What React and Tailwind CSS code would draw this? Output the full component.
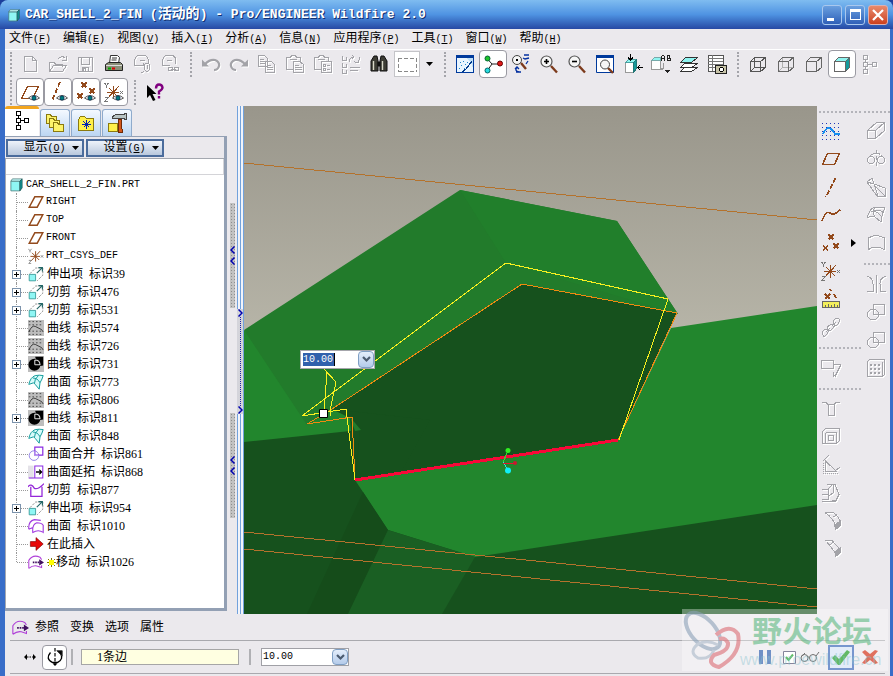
import { useState } from 'react';

const GRAY = '#a3a3a8';
const BROWN = '#934a1c';

function Svg({ children, s = 20, emboss }) {
  return (
    <svg
      width={s}
      height={s}
      viewBox="0 0 20 20"
      fill="none"
      stroke={emboss ? GRAY : '#333'}
      shapeRendering={s === 20 ? 'crispEdges' : 'auto'}
      className={emboss ? 'shrink-0 drop-shadow-[1px_1px_0_#fff]' : 'shrink-0'}
      aria-hidden="true"
    >
      {children}
    </svg>
  );
}

const Eye = () => (
  <g shapeRendering="auto">
    <path d="M8.500 16q5.500-5 11 0q-5.500 4-11 0z" fill="#fff" stroke="#555" />
    <circle cx="14" cy="16" r="2.200" fill="#007b7b" stroke="#014" strokeWidth=".6" />
  </g>
);

const Lens = ({ children }) => (
  <g shapeRendering="auto">
    <path d="M12 12l6 6.500" stroke="#7c3a1c" strokeWidth="2.400" />
    <circle cx="7.500" cy="7.500" r="5.500" fill="#f6f6f6" stroke="#555" strokeWidth="1.200" />
    {children}
  </g>
);

const xs = (pts, c = BROWN) =>
  pts.map(([x, y]) => (
    <path key={`${x}-${y}`} d={`M${x - 2.5} ${y - 2.5}l5 5m0-5l-5 5`} stroke={c} strokeWidth="1.6" />
  ));

const csys = (
  <g>
    <path d="M3 10.500h12M9.500 4v13M5 6l9 9M15 4L4 16" stroke={BROWN} strokeWidth="1.200" />
    <path d="M.5 1l2 2.500l2-2.500M2.500 3.500v2M1 15.500h3l-3 4h3M16 9l3 3m0-3l-3 3" stroke="#777" />
  </g>
);

const cube = 'M2.5 7.5h10v10h-10zM2.5 7.5l4-4h11l-5 4M17.5 3.5v10l-5 4';

const icons = {
  new: <path d="M4.500 2.500h8l4 4v11h-12zM12.500 2.500v4h4" />,
  open: <path d="M1.500 17.500v-9h5l1 2h7v2M1.500 17.500l4-6h13l-4 6zM10 5q4-4 7-1M18 2v4h-4" />,
  save: <path d="M2.500 3.500h14v14h-14zM5.500 3.500v7h8v-7M6.500 17.500v-4h6v4M7 14h2v3H7z" />,
  print: (
    <g shapeRendering="auto">
      <path d="M5.500 9.500l1-8h7l2 2-1 6" fill="#fff" />
      <path d="M8 4h5M7.500 6h5" />
      <path d="M1.500 10.500l3-2h12l2 2v6h-17z" fill="#8b8f78" stroke="#222" />
      <path d="M2 11.500h16" stroke="#ddd" />
      <path d="M4 14.500h3" stroke="#0a0" strokeWidth="2" />
      <path d="M8 14.500h3" stroke="#d00" strokeWidth="2" />
    </g>
  ),
  mail: <path d="M2.500 11.500V6q1-5 7-5t7 5v3M2.500 11.500h9v-3M8 6h5M12.500 10.500q3-3 5 0v5q-2 4-5 0zM15 11v4M12 17q-1 2-3 1" />,
  mailLink: <path d="M2.500 11.500V6q1-5 7-5t6 5v4M2.500 11.500h7M7 6h5M8.500 13.500h4v3h-4zM14.500 13.500h4v3h-4zM11 15h5" />,
  undo: (
    <g shapeRendering="auto">
      <path d="M1 5.500v7h7z" fill={GRAY} stroke="none" />
      <path d="M4 10q5-5 10-4q5 2 4 6t-5 4" strokeWidth="2.200" />
    </g>
  ),
  redo: (
    <g shapeRendering="auto">
      <path d="M19 5.500v7h-7z" fill={GRAY} stroke="none" />
      <path d="M16 10q-5-5-10-4q-5 2-4 6t5 4" strokeWidth="2.200" />
    </g>
  ),
  copy: <path d="M1.500 1.500h6l3 3v8h-9zM3 5.500h4M3 7.500h5M3 9.500h5M8.500 7.500h6l3 3v8h-9zM10 11.500h4M10 13.500h6M10 15.500h6" />,
  paste: <path d="M7.500 15.500h-6v-12h4l1-2h4l1 2h4v4M5 5.500h7M8.500 7.500h6l4 3v8h-10zM10 11.500h4M10 13.500h7M10 15.500h7" />,
  pasteSpecial: <path d="M7.500 15.500h-6v-12h4l1-2h4l1 2h4v4M5 5.500h7M8.500 7.500h10v11h-10zM10.500 10.500h2v2h-2zM10.500 14.500h2v2h-2zM14 11.500h3M14 15.500h3" />,
  regen: <path d="M1.500 2v4h4V3M1.500 9v4h4v-3M1.500 15v4h4v-3M9 16.500h8M9 13.500h10M8 8q0-5 5-5M11 1l2 2-2 2M18 3q1 5-3 6M13 7l2 2 3-1" />,
  find: (
    <g shapeRendering="auto" stroke="#111">
      <path d="M2 7l3-5h3l1 5v10H2zM18 7l-3-5h-3l-1 5v10h7z" fill="#3c3c34" />
      <path d="M9 8h2v4H9z" fill="#111" />
      <path d="M4.500 7v9M13.500 7v9" stroke="#d8d8c8" strokeWidth="1.400" />
    </g>
  ),
  select: <path d="M1 4.500h19M1 17.500h19M1.500 4v14M19.500 4v14" stroke="#888" strokeDasharray="4 2" />,
  repaint: (
    <g>
      <path d="M1.500 1.500h17v17h-17z" fill="#bfe0f7" stroke="#003a9c" />
      <path d="M1 2.500h18" stroke="#003a9c" strokeWidth="3" />
      <path d="M2 4h9q7 4 7 14H2z" fill="#e8f5ff" stroke="none" />
      <path d="M5 8.500h1M8 7.500h1M6 11.500h1M10 10.500h1M4 14.500h1M9 14.500h1M12 8.500h1" stroke="#28c" />
      <path d="M17 7l-6 8-4 3" stroke="#013a8c" strokeWidth="1.300" />
    </g>
  ),
  spin: (
    <g shapeRendering="auto">
      <path d="M4 4.500l5 5.500-5 7M9 10h9" stroke="#222" />
      <circle cx="4.500" cy="4.500" r="2.500" fill="#1fc42a" stroke="#063" />
      <circle cx="4.500" cy="16.500" r="2.500" fill="#28dce0" stroke="#066" />
      <circle cx="17" cy="9.500" r="2.500" fill="#e01818" stroke="#600" />
    </g>
  ),
  orient: (
    <g shapeRendering="auto">
      <path d="M10 9l5 6" stroke="#7c3a1c" strokeWidth="2.400" />
      <circle cx="6" cy="6" r="4.500" fill="#f6f6f6" stroke="#444" />
      <path d="M6 5v2" stroke="#000" strokeWidth="2" />
      <path d="M13 1h5M12 4l2 1 4-1M17 7l-2 3M6 13q-3 4 2 5M4 15l2-2 2 2M5 18h5" stroke="#0430a0" strokeWidth="1.300" />
    </g>
  ),
  zoomIn: <Lens><path d="M5 7.500h5M7.500 5v5" stroke="#000" strokeWidth="1.600" /></Lens>,
  zoomOut: <Lens><path d="M5 7.500h5" stroke="#000" strokeWidth="1.600" /></Lens>,
  refit: (
    <g shapeRendering="auto">
      <path d="M1.500 1.500h17v17h-17z" fill="#fff" stroke="#003a9c" />
      <path d="M1 2.500h18" stroke="#003a9c" strokeWidth="3" />
      <path d="M13 14l5 5" stroke="#7c3a1c" strokeWidth="2.400" />
      <circle cx="10" cy="10.500" r="4.500" fill="#f6f6f6" stroke="#444" />
    </g>
  ),
  reorient: (
    <g>
      <path d="M2.500 8.500h8v10h-8z" fill="#fff" stroke="#999" />
      <path d="M2.500 8.500l3-3h8l-3 3z" fill="#8ef4f0" stroke="#48a0a0" />
      <path d="M10.500 8.500l3-3v9l-3 4z" fill="#159a9a" stroke="#277" />
      <path d="M7.500 0v6M5 3.500l2.500 2.500 2.500-2.500M20 13.500h-5M17 11l-2.500 2.500L17 16" stroke="#000" strokeWidth="1.400" />
    </g>
  ),
  saved: (
    <g>
      <path d="M.5 6.500h9v9h-9z" fill="#fff" stroke="#999" />
      <path d="M.5 6.500l3-3h6v3z" fill="#8ef4f0" stroke="#7aa" />
      <path d="M12.500 9v5l-3 2" stroke="#999" strokeWidth="1.500" />
      <path d="M10.500 7V2.500l1-1h1l1 1V7M10.500 4.500h3M16.500 1v6M16 1.500h2.500v2.500H16M16 4.500h3v2h-3" stroke="#222" />
      <path d="M14 16h5l-2.500 3z" fill="#222" stroke="none" />
    </g>
  ),
  layers: (
    <g>
      <path d="M1.500 17.500l4-4h13l-6 4z" fill="#fff" />
      <path d="M1.500 13.500l4-4h13l-6 4z" fill="#fff" />
      <path d="M1.500 8.500l5-5h12l-6 5z" fill="#8ef4f0" />
    </g>
  ),
  viewMgr: (
    <g>
      <path d="M1.500 1.500h15v16h-15z" fill="#fff" stroke="#555" />
      <path d="M1 4.500h15M1 7.500h15M1 10.500h15M1 13.500h15M5.500 1v16" stroke="#777" />
      <path d="M8.500 11.500h11v8h-11z" fill="#c8c4a8" stroke="#222" />
      <circle cx="14.500" cy="15.500" r="2" fill="#fff" stroke="#000" />
    </g>
  ),
  wire: <path d={`${cube}M2.5 17.5l4-4h11M6.5 3.5v10`} stroke="#555" />,
  hidden: (
    <g>
      <path d="M2.500 17.500l4-4h11M6.500 3.500v10" stroke="#b0b0b0" />
      <path d={cube} stroke="#666" />
    </g>
  ),
  nohidden: <path d={cube} stroke="#666" />,
  shaded: (
    <g stroke="#666">
      <path d="M2.500 7.500h11v10h-11z" fill="#fff" />
      <path d="M2.500 7.500l4-4h11l-4 4z" fill="#8ef4f0" />
      <path d="M13.500 7.500l4-4v10l-4 4z" fill="#129a9c" />
    </g>
  ),
  tree: <path d="M3.500 1.500h4v4h-4zM3.500 8.500h4v4h-4zM3.500 15.500h4v4h-4zM12.500 8.500h4v4h-4zM5.500 5v4M5.500 12v4M8 10.500h5" />,
  planeEye: <g><path d="M1.500 16.500h11l6-12h-11z" stroke={BROWN} strokeWidth="1.500" /><Eye /></g>,
  axisEye: <g><path d="M12 0L4 19" stroke={BROWN} strokeWidth="1.800" strokeDasharray="5 2" /><Eye /></g>,
  pointEye: <g>{xs([[8, 3], [4, 14], [16, 9]])}<Eye /></g>,
  csysEye: <g>{csys}<Eye /></g>,
  help: (
    <g shapeRendering="auto">
      <path d="M2 3v13l3-3 3 6 2.500-1-3-6h4z" fill="#000" stroke="none" />
      <path d="M11 6.500q0-4 3-4t3.500 3q0 2-3.500 4v3" stroke="#800080" strokeWidth="2.400" />
      <path d="M14 14v2.500" stroke="#800080" strokeWidth="2.400" />
    </g>
  ),
  sketch: (
    <g>
      <path d="M1 2.500h18M1 6.500h18M1 10.500h18M1 14.500h18M1 18.500h18" stroke="#2038b8" strokeDasharray="1 3" />
      <path d="M2 13q4-9 8-5t4 5h5" stroke="#1890f0" strokeWidth="1.600" />
    </g>
  ),
  plane: <path d="M1.500 15.500h12l5-11H6.500z" stroke={BROWN} strokeWidth="1.500" />,
  axis: <path d="M14.500 1L5 20" stroke={BROWN} strokeWidth="1.800" strokeDasharray="5 2" />,
  curve: <path d="M1 16q4-11 8-8t10-3" stroke={BROWN} strokeWidth="1.500" />,
  points: <g>{xs([[10, 4], [4.5, 15], [15, 13]])}</g>,
  csys,
  analysis: (
    <g>
      {xs([[6.5, 7.5]])}
      <path d="M9 0l1 2M13 5l2 4" stroke={BROWN} strokeWidth="2" />
      <path d="M1.500 12.500h17v6h-17z" fill="#f2ee5c" stroke="#666" />
      <path d="M4.500 19v-3M7.500 19v-4M10.500 19v-3M13.500 19v-4M16.500 19v-3" stroke="#666" />
    </g>
  ),
  chain: <path d="M2 18q-2-3 1-5t4 0-2 5-3 0M7 12q-1-3 2-4t4 0-2 4-4 0M13 7q-2-3 1-5t4 0-1 5-4 0M5 15l4-4M11 9l4-4" />,
  annot: <path d="M.5 2.500h12v8H.5zM12 6.500h8l-6 12M12.500 14v4.500l4-3" />,
  hole: <path d="M1 3.500h4l2 2v11h6v-11l2-2h4M7 5.500h6" />,
  shell: <path d="M1.500 4.500l3-3h14v12l-3 3h-14zM4.500 5.500h11v11M4.500 5.500v11M7.500 8.500h5v5h-5z" />,
  rib: (
    <g>
      <path d="M2.500 8v10.500h14" strokeDasharray="1 1" />
      <path d="M4.500 6v10.500h11zM2 6l6-6M14 16l5-4" />
    </g>
  ),
  draft: <path d="M1 6.500h6v10H1M7 6.500l4-5h3l4 10-3 6-8 1M6 1.500h6M12 2v8l-4 3M1 11.500h6M1 18.500h14" />,
  round: <g><path d="M4 1.500h8q7 4 7 11l-5 3q0-7-10-14M12 6l4-2" /><path d="M14 14v5l5-4v-5z" fill={GRAY} /></g>,
  chamfer: <g><path d="M4 1.500h7l8 9-5 3L6 3M8 6l5-3" /><path d="M14 13v5l5-4v-5z" fill={GRAY} /></g>,
  extrude: <path d="M1.500 9.500h8v8h-8zM1.500 9.500l9-8h8l-9 8M18.500 1.500v8l-9 8" />,
  revolve: <g><circle cx="5" cy="11" r="3.500" /><circle cx="15" cy="11" r="3.500" /><path d="M10.500 1v18" strokeDasharray="4 2" /><path d="M4 7q6-6 12 0" strokeDasharray="3 1" /></g>,
  sweep: <path d="M1 5l5-4 2 6 11 4v8h-8L1 5M1 5l7 2M8 7l4 12M8 8l11 11" />,
  boundary: <path d="M1 13Q4 3 9 2q6 0 10 1-3 5-4 14l-6-5q-4-2-8 1M5 6q6 0 10 5M9 2q-3 5 0 10M17 7q-5-3-9-1" />,
  style: <path d="M2.500 16.500V5q7-5 16 0v11.500q-9-5-16 0z" />,
  mirror: <path d="M10.500 1v18M1 2.500q6 1 6 7v8H1M20 2.500q-6 1-6 7v8h6" />,
  merge: <g><circle cx="7" cy="12.500" r="5.500" /><path d="M7.500 2.500h11v10h-11z" /></g>,
  pattern: <g><path d="M1.500 3.500l2-2h15v15l-2 2h-15zM16.500 3.500v15" /><path d="M4 6.500h11M4 10.500h11M4 14.500h11" strokeWidth="2" strokeDasharray="2 2" /></g>,
};

const treeIcons = {
  plane: <path d="M1.500 16.500h10l7-13h-10z" stroke={BROWN} strokeWidth="1.800" />,
  csys,
  part: (
    <g>
      <path d="M2.500 5.500h12v13h-12z" fill="#8ff6f4" stroke="#477" />
      <path d="M2.500 5.500l2-3h13l-3 3z" fill="#c8fcfb" stroke="#477" />
      <path d="M14.500 5.500l3-3v12l-3 4z" fill="#0e9696" stroke="#255" />
    </g>
  ),
  extrude: (
    <g>
      <path d="M2.500 9.500l7-7h9v9l-7 7" stroke="#777" strokeDasharray="3 1.500" />
      <path d="M11 9l7-7M13 2h5v5" stroke="#266" strokeWidth="1.400" />
      <path d="M1.500 10.500h8v8h-8z" fill="#8ff6f4" stroke="#2a9090" />
    </g>
  ),
  curve: (
    <g>
      <path d="M0 0h20v20H0z" fill="#bdbdbd" stroke="none" />
      <path d="M1 2h18M1 6h18M1 14h18M1 18h18" stroke="#333" strokeDasharray="2 2.500" />
      <path d="M1 15q4-9 8-7t8 4l2 3" stroke="#222" />
    </g>
  ),
  group: (
    <g>
      <path d="M0 0h20v20H0z" fill="#bdbdbd" stroke="none" />
      <path d="M9 1h10v11l-7 1z" fill="#000" stroke="none" />
      <circle cx="8" cy="11" r="7.500" fill="#000" stroke="none" />
      <path d="M8.500 11V5M8.500 11H15q0-6-6.500-6" stroke="#ddd" strokeWidth="1.300" />
    </g>
  ),
  surf: (
    <g stroke="#0f9a9a" strokeWidth="1.200">
      <path d="M1 13Q3 4 9 2q5-1 10 0-1 4-4 9l-1 8-5-6-2-2z" fill="#d8fbfa" />
      <path d="M6 5q6 0 9 6M8 12q0-6 5-10" />
    </g>
  ),
  merge: (
    <g>
      <circle cx="7.500" cy="12" r="6" stroke="#7c6ae0" />
      <path d="M8.500 1.500h10v10h-10z" stroke="#8a2be2" strokeWidth="1.500" />
      <path d="M8.500 6v6h5" stroke="#b8b0f0" />
    </g>
  ),
  extend: (
    <g>
      <path d="M0 2h7v16H0z" fill="#e4e2e8" stroke="none" />
      <path d="M8.500 2.500h10v15h-10zM1 17.500h8" stroke="#8a2be2" strokeWidth="1.300" />
      <path d="M10 10h7M14 7l3 3-3 3" stroke="#000" strokeWidth="1.600" />
    </g>
  ),
  trim: <path d="M0 6q4-5 8 2q4 2 12-6M3.500 6v12h14V6" stroke="#9427d8" strokeWidth="1.600" />,
  quilt: <path d="M1 14Q0 4 8 2l8 1M1 14l5-2M6 18Q5 8 11 6q6 0 8 3v9q-6-4-13 0z" stroke="#a13ae0" strokeWidth="1.400" />,
  insert: <path d="M3 7h7V2l9 8-9 8v-5H3z" fill="#e80808" stroke="#7a0000" strokeWidth=".8" />,
  move: (
    <g>
      <path d="M1 18V8q5-8 14-4l2 3M1 18q5-4 10-3l6 2v-3" stroke="#b040d8" strokeWidth="1.300" />
      <path d="M6 10.500h8" stroke="#401060" strokeWidth="2" strokeDasharray="2 1" />
      <path d="M14 6.500l6 4-6 4z" fill="#401060" stroke="none" />
    </g>
  ),
};

const menus = [
  ['文件', 'F'], ['编辑', 'E'], ['视图', 'V'], ['插入', 'I'], ['分析', 'A'],
  ['信息', 'N'], ['应用程序', 'P'], ['工具', 'T'], ['窗口', 'W'], ['帮助', 'H'],
];

const features = [
  { icon: 'plane', code: 'RIGHT' },
  { icon: 'plane', code: 'TOP' },
  { icon: 'plane', code: 'FRONT' },
  { icon: 'csys', code: 'PRT_CSYS_DEF' },
  { icon: 'extrude', name: '伸出项', id: 39, plus: true },
  { icon: 'extrude', name: '切剪', id: 476, plus: true },
  { icon: 'extrude', name: '切剪', id: 531, plus: true },
  { icon: 'curve', name: '曲线', id: 574 },
  { icon: 'curve', name: '曲线', id: 726 },
  { icon: 'group', name: '曲线', id: 731, plus: true },
  { icon: 'surf', name: '曲面', id: 773 },
  { icon: 'curve', name: '曲线', id: 806 },
  { icon: 'group', name: '曲线', id: 811, plus: true },
  { icon: 'surf', name: '曲面', id: 848 },
  { icon: 'merge', name: '曲面合并', id: 861 },
  { icon: 'extend', name: '曲面延拓', id: 868 },
  { icon: 'trim', name: '切剪', id: 877 },
  { icon: 'extrude', name: '伸出项', id: 954, plus: true },
  { icon: 'quilt', name: '曲面', id: 1010 },
  { icon: 'insert', name: '在此插入' },
  { icon: 'move', name: '移动', id: 1026, star: true },
];

function Tool({ name, gray, active }) {
  return (
    <button
      aria-label={name}
      className={
        active
          ? 'flex h-7 w-7 shrink-0 items-center justify-center rounded border border-[#9a9aa2] bg-white'
          : 'flex h-7 w-7 shrink-0 items-center justify-center'
      }
    >
      <Svg emboss={gray}>{icons[name]}</Svg>
    </button>
  );
}

const Grip = ({ first }) => (
  <div className={first ? 'flex w-[11px] shrink-0 justify-center' : 'flex w-[13px] shrink-0 justify-center'}>
    <div className="h-[25px] border-l-2 border-dotted border-[#a4a4aa]" />
  </div>
);

const Dashes = ({ first }) => (
  <div className={first ? 'flex h-[11px] items-center pl-0.5' : 'flex h-[13px] items-center pl-0.5'}>
    <div className="w-full border-t-2 border-dotted border-[#b4b4ba]" />
  </div>
);

const Key = ({ k }) => (
  <span className="font-['Liberation_Mono',monospace] text-[10px]">(<u>{k}</u>)</span>
);

const Down = () => (
  <svg width="7" height="4" viewBox="0 0 7 4" aria-hidden="true"><path d="M0 0h7L3.500 4z" fill="#000" /></svg>
);

function Combo({ label, value, selected }) {
  const [text, setText] = useState(value);
  return (
    <div className={selected
      ? 'flex h-[19px] w-[75px] items-center border border-[#a6a6ac] bg-white'
      : 'flex h-[18px] w-[88px] items-center border border-[#a0a0a6] bg-white'}
    >
      <div className={selected ? 'min-w-0 flex-1 pl-0.5' : 'min-w-0 flex-1 pl-px'}>
        <input
          aria-label={label}
          value={text}
          onChange={(e) => setText(e.target.value)}
          className={selected
            ? "block h-[13px] w-8 border-r border-black bg-[#3161ac] font-['Liberation_Mono',monospace] text-[10px] text-white outline-none"
            : "block h-4 w-full font-['Liberation_Mono',monospace] text-[10px] outline-none"}
        />
      </div>
      <button aria-label={`${label} list`} className="flex h-full w-4 items-center justify-center rounded-sm border border-[#7f9fc4] bg-gradient-to-b from-[#e4eefb] to-[#b4cbea]">
        <svg width="9" height="7" viewBox="0 0 9 7" aria-hidden="true"><path d="M1 1l3.500 3.500L8 1" fill="none" stroke="#4b5b70" strokeWidth="2.200" /></svg>
      </button>
    </div>
  );
}

function TitleBar() {
  return (
    <header className="flex h-[29px] shrink-0 items-center justify-between rounded-t-lg bg-gradient-to-b from-[#7fbcf0] via-[#4f93e2] to-[#2749a4] pl-[7px] pr-[5px]">
      <div className="flex items-center gap-1">
        <Svg s={14}>{treeIcons.part}</Svg>
        <h1 className="whitespace-nowrap font-['Liberation_Mono','Noto_Sans_CJK_SC',monospace] text-[13px] font-bold leading-5 text-white [text-shadow:1px_1px_0_#123070]">
          CAR_SHELL_2_FIN (<span className="text-sm leading-4">活动的</span>) - Pro/ENGINEER Wildfire 2.0
        </h1>
      </div>
      <div className="flex gap-[3px]">
        <button aria-label="Minimize" className="flex h-5 w-5 items-end justify-start rounded-[3px] border border-[#a9c8ee] bg-gradient-to-b from-[#6a9fdf] to-[#3060b8] pb-[3px] pl-1">
          <span className="h-[3px] w-[7px] bg-white" />
        </button>
        <button aria-label="Maximize" className="flex h-5 w-5 items-center justify-center rounded-[3px] border border-[#a9c8ee] bg-gradient-to-b from-[#6a9fdf] to-[#3060b8]">
          <span className="h-[11px] w-[11px] border border-t-[3px] border-white" />
        </button>
        <button aria-label="Close" className="flex h-5 w-5 items-center justify-center rounded-[3px] border border-[#dcb0b0] bg-gradient-to-b from-[#e88a6c] to-[#cc3f1c]">
          <svg width="12" height="12" viewBox="0 0 12 12" aria-hidden="true"><path d="M1 1l10 10M11 1L1 11" stroke="#fff" strokeWidth="2.200" /></svg>
        </button>
      </div>
    </header>
  );
}

function Toolbars() {
  return (
    <div>
      <div className="flex h-7 items-center">
        <Grip first />
        <Tool name="new" gray />
        <Tool name="open" gray />
        <Tool name="save" gray />
        <Tool name="print" />
        <Tool name="mail" gray />
        <Tool name="mailLink" gray />
        <Grip />
        <Tool name="undo" gray />
        <Tool name="redo" gray />
        <Tool name="copy" gray />
        <Tool name="paste" gray />
        <Tool name="pasteSpecial" gray />
        <Tool name="regen" gray />
        <Tool name="find" />
        <button aria-label="select" className="mx-px flex h-[26px] w-[26px] shrink-0 items-center justify-center border border-[#c4c4c8] bg-white">
          <Svg>{icons.select}</Svg>
        </button>
        <button aria-label="select options" className="flex w-[17px] shrink-0 justify-center"><Down /></button>
        <Grip />
        <Tool name="repaint" />
        <Tool name="spin" active />
        <Tool name="orient" />
        <Tool name="zoomIn" />
        <Tool name="zoomOut" />
        <Tool name="refit" />
        <Tool name="reorient" />
        <Tool name="saved" />
        <Tool name="layers" />
        <Tool name="viewMgr" />
        <Grip />
        <Tool name="wire" />
        <Tool name="hidden" />
        <Tool name="nohidden" />
        <Tool name="shaded" active />
        <Tool name="tree" gray />
      </div>
      <div className="flex h-7 items-center">
        <Grip first />
        <Tool name="planeEye" active />
        <Tool name="axisEye" active />
        <Tool name="pointEye" active />
        <Tool name="csysEye" active />
        <Grip />
        <Tool name="help" />
      </div>
    </div>
  );
}

function Tabs() {
  const idle = 'mt-[3px] flex h-[27px] w-[30px] items-center justify-center rounded-t-[3px] border border-b-0 border-[#8fabcc] bg-gradient-to-b from-[#f4f9ff] to-[#bcd6f2]';
  const folder = (x, y) => <path d={`M${x} ${y}h4l1 2h5v7h-10z`} fill="#fdf36a" stroke="#8a7a10" />;
  return (
    <div className="flex h-[30px] gap-px">
      <button aria-label="Model tree" className="flex w-[34px] items-start justify-center rounded-t-[3px] border-t-[3px] border-[#f2a51e] bg-white pt-0.5">
        <Svg>
          <path d="M4.500 .5h4v4h-4zM4.500 7.500h4v4h-4zM4.500 14.500h4v4h-4zM12.500 7.500h4v4h-4zM6.500 4v4M6.500 11v4M8 9.500h5" stroke="#000" />
        </Svg>
      </button>
      <button aria-label="Folder browser" className={idle}><Svg>{folder(1.5, 1.5)}{folder(4.5, 5.5)}{folder(8.5, 9.5)}</Svg></button>
      <button aria-label="Favorites" className={idle}>
        <Svg>
          <path d="M2.500 6.500l2-3h4l2 2h7v12h-15z" fill="#fff04a" stroke="#8a7a10" />
          <path d="M10.500 7v9M6 11.500h9M7.500 8.500l6 6M13.500 8.500l-6 6" stroke="#0020b0" />
        </Svg>
      </button>
      <button aria-label="Connections" className={idle}>
        <Svg>
          <path d="M1.500 10.500h9v8h-9z" fill="#fff04a" stroke="#8a7a10" />
          <path d="M5 4q3-3 8-2.500h3l3-1v6l-3-1H9L5 6z" fill="#b8c4c4" stroke="#444" />
          <path d="M11.500 6h3v6l1 7h-4z" fill="#d2581c" stroke="#702a08" />
        </Svg>
      </button>
    </div>
  );
}

function TreeRow({ f, last }) {
  return (
    <li className="flex h-[18px] items-center">
      <span className="flex h-full w-[22px] shrink-0 items-center pl-1.5">
        <span className={last
          ? 'h-1/2 w-[5px] self-start border-r border-dotted border-[#999]'
          : 'h-full w-[5px] border-r border-dotted border-[#999]'}
        />
        <span className="min-w-0 flex-1 border-t border-dotted border-[#999]" />
        {f.plus && (
          <button aria-label="expand" className="-ml-4 mr-[7px] flex h-[9px] w-[9px] shrink-0 items-center justify-center border border-[#7c93ac] bg-white">
            <svg width="5" height="5" viewBox="0 0 5 5" aria-hidden="true"><path d="M0 2.500h5M2.500 0v5" stroke="#000" /></svg>
          </button>
        )}
      </span>
      <Svg s={16}>{treeIcons[f.icon]}</Svg>
      {f.code ? (
        <span className="ml-0.5 font-['Liberation_Mono',monospace] text-[10px]">{f.code}</span>
      ) : (
        <span className="ml-[3px] flex gap-1.5 whitespace-nowrap">
          <span className="flex items-center">
            {f.star && (
              <svg width="9" height="9" viewBox="0 0 9 9" aria-hidden="true">
                <path d="M4.500 0v9M0 4.500h9M1 1l7 7M8 1L1 8" stroke="#807800" />
                <path d="M2 2h5v5H2z" fill="#ff0" />
              </svg>
            )}
            {f.name}
          </span>
          {f.id && <span>标识{f.id}</span>}
        </span>
      )}
    </li>
  );
}

function ModelTree() {
  const btn = 'flex h-[18px] w-[78px] items-center justify-center gap-1.5 border-2 border-[#4b6c9c] bg-gradient-to-b from-[#eef3fa] to-[#b9c8dd] pl-3 text-xs leading-3';
  return (
    <aside className="flex w-[222px] shrink-0 flex-col pb-[3px]">
      <Tabs />
      <div className="flex flex-1 flex-col border-b-[3px] border-r-[3px] border-t border-[#93a0b4] bg-[#ebe9ed]">
        <div className="flex h-[21px] items-center gap-0.5 pl-px">
          <button className={btn}><span>显示<Key k="O" /></span><Down /></button>
          <button className={btn}><span>设置<Key k="G" /></span><Down /></button>
        </div>
        <div className="flex-1 border-l border-t border-[#a4a8b0] bg-white">
          <input aria-label="Filter" className="block h-4 w-full border-b border-r border-[#d4d4d8] outline-none" />
          <div className="flex h-[18px] items-center gap-0.5 pl-[3px] pt-px">
            <Svg s={15}>{treeIcons.part}</Svg>
            <span className="font-['Liberation_Mono',monospace] text-[10px]">CAR_SHELL_2_FIN.PRT</span>
          </div>
          <ul>
            {features.map((f, i) => <TreeRow key={i} f={f} last={i === features.length - 1} />)}
          </ul>
        </div>
      </div>
    </aside>
  );
}

const Chevron = ({ right }) => (
  <svg width="5" height="8" viewBox="0 0 5 8" aria-hidden="true">
    <path d={right ? 'M.5 .5L4 4L.5 7.500' : 'M4.500 .5L1 4l3.500 3.500'} fill="none" stroke="#0000b0" strokeWidth="1.500" />
  </svg>
);

const Rails = ({ top }) => (
  <div className={top ? 'flex h-[203px] justify-center border-x border-[#72a2dc] bg-[#f2f4fa]' : 'flex flex-1 justify-center border-x border-[#72a2dc] bg-[#f2f4fa]'}>
    <div className="border-l border-[#72a2dc]" />
  </div>
);

function Splitter() {
  const strip = 'flex h-[105px] w-[5px] flex-col items-center justify-center gap-[3px] bg-[#c2c2c2] bg-[radial-gradient(#8e8e8e_30%,transparent_35%)] bg-[length:3px_3px]';
  return (
    <div className="flex shrink-0">
      <div className="flex w-[10px] flex-col items-center gap-[105px] pt-[97px]">
        <div className={strip}><Chevron /><Chevron /></div>
        <div className={strip}><Chevron /><Chevron /></div>
      </div>
      <div className="flex w-[7px] flex-col">
        <Rails top />
        <div className="flex h-[105px] flex-col items-center justify-between border-r border-[#72a2dc] bg-[#d4d4da]">
          <Chevron right />
          <div className="flex-1 border-l border-dotted border-[#2020a8]" />
          <Chevron right />
        </div>
        <Rails />
      </div>
    </div>
  );
}

function Viewport() {
  return (
    <main className="relative min-w-0 flex-1">
      <div className="h-full w-full">
        <svg viewBox="244 106 573 508" preserveAspectRatio="none" className="block h-full w-full" role="img" aria-label="Model">
          <defs>
            <linearGradient id="sky" x1="0" y1="0" x2="0" y2="1">
              <stop offset="0" stopColor="#99968b" />
              <stop offset=".5" stopColor="#bab8ab" />
            </linearGradient>
          </defs>
          <path d="M244 106h573v508H244z" fill="url(#sky)" />
          <path d="M244 330L332 409L618 440L671 328L817 306V614H244z" fill="#22862d" />
          <path d="M244 330L460 190L617 221L678 314L522 284L332 409L307 425z" fill="#227b2b" />
          <path d="M460 190L617 221L678 314L506 263z" fill="#217f2b" />
          <path d="M522 284L677 313L618 440L355 480L350 418L332 409z" fill="#16511d" />
          <path d="M244 442L360 430L355 480L363 492L388 530L475 557L817 505V614H244z" fill="#16511d" />
          <path d="M332 409L350 417L360 430L356 480L400 474L430 420z" fill="#16511d" />
          <path d="M350 417L361 430L355 431z" fill="#227b2b" />
          <path d="M363 492L388 530L348 614H307z" fill="#154c1a" />
          <path d="M388 530L475 557L442 614H348z" fill="#1a5f23" />
          <g fill="none" shapeRendering="crispEdges">
            <path d="M244 163L817 220M244 532L817 589M244 549L817 607" stroke="#b4722c" />
            <path d="M522 284L677 313L618 440M355 480L352 417L307 424L332 409L522 284" stroke="#f08a10" />
            <path d="M506 263L668 299L619 440M506 263L302 416L346 409L355 480M327 371L324 413M324 369L336 382L333 396L330 411M330 416v-6" stroke="#f8f020" />
            <path d="M355 480L618 440" stroke="#f80838" strokeWidth="3" />
            <path d="M508 451l-5 11" stroke="#30e030" />
            <path d="M503 462l5 8" stroke="#20e8f0" />
            <path d="M503 463h12" stroke="#e01830" />
          </g>
          <path d="M319.500 409.500h8v8h-8z" fill="#fff" stroke="#000" />
          <circle cx="508" cy="450.500" r="2.500" fill="#30f020" />
          <circle cx="508" cy="470.500" r="3" fill="#10f0f8" />
          <circle cx="515" cy="463" r="2" fill="#c81830" />
        </svg>
      </div>
      <div className="absolute left-14 top-[244px]">
        <Combo label="Offset" value="10.00" selected />
      </div>
    </main>
  );
}

function FeatureBars() {
  return (
    <nav className="flex w-[73px] shrink-0 justify-between">
      <div className="w-11">
        <Dashes first />
        <Tool name="sketch" />
        <Tool name="plane" />
        <Tool name="axis" />
        <Tool name="curve" />
        <div className="flex items-center gap-1.5">
          <Tool name="points" />
          <button aria-label="more points">
            <svg width="5" height="8" viewBox="0 0 5 8" aria-hidden="true"><path d="M0 0l5 4-5 4z" fill="#000" /></svg>
          </button>
        </div>
        <Tool name="csys" />
        <Tool name="analysis" />
        <Tool name="chain" gray />
        <Dashes />
        <Tool name="annot" gray />
        <Dashes />
        <Tool name="hole" gray />
        <Tool name="shell" gray />
        <Tool name="rib" gray />
        <Tool name="draft" gray />
        <Tool name="round" gray />
        <Tool name="chamfer" gray />
      </div>
      <div className="w-7">
        <Dashes first />
        <Tool name="extrude" gray />
        <Tool name="revolve" gray />
        <Tool name="sweep" gray />
        <Tool name="boundary" gray />
        <Tool name="style" gray />
        <Dashes />
        <Tool name="mirror" gray />
        <Tool name="merge" gray />
        <Tool name="merge" gray />
        <Tool name="pattern" gray />
      </div>
    </nav>
  );
}

function Watermark() {
  return (
    <div className="pointer-events-none absolute bottom-[5px] right-0.5 flex h-[62px] w-[206px] bg-white/35">
      <svg width="62" height="62" viewBox="0 0 62 62" fill="none" className="shrink-0 opacity-60" aria-hidden="true">
        <ellipse cx="21" cy="22" rx="12" ry="22" transform="rotate(-42 21 22)" stroke="#8ba1b8" strokeWidth="4" />
        <path d="M36 36q-10-6-20-1q-10 8 0 14q12 2 16-8" stroke="#a9b8c8" strokeWidth="3" />
        <path d="M34 26q14-12 22-1q4 20-19 33q-13-3-5-12q15-4 14-12q-3-6-9-4" stroke="#dc6c74" strokeWidth="4" />
      </svg>
      <div className="flex flex-col gap-[3px] pl-2">
        <span className="font-['Noto_Sans_CJK_SC',sans-serif] text-[30px] font-bold leading-10 text-[#5cb880]/60">野火论坛</span>
        <span className="-ml-3 font-['Liberation_Sans',sans-serif] text-base leading-4 text-[#8cc4d0]/45">www.proewildfire.cn</span>
      </div>
    </div>
  );
}

function Dashboard() {
  const [preview, setPreview] = useState(true);
  const line = 'h-4 border-l-2 border-[#b0b0b4]';
  return (
    <footer className="relative shrink-0 pb-0.5">
      <div className="flex h-[26px] items-center gap-[11px] pl-[7px]">
        <span className="-mr-[5px] flex"><Svg s={17}>{treeIcons.move}</Svg></span>
        <button>参照</button>
        <button>变换</button>
        <button>选项</button>
        <button>属性</button>
      </div>
      <div className="mx-[5px] flex h-[34px] items-center border-y border-[#a9a9ae]">
        <button aria-label="Translate" className="ml-3 flex w-4 justify-center">
          <svg width="12" height="6" viewBox="0 0 12 6" aria-hidden="true"><path d="M3 0v6L0 3zM9 0v6l3-3z" /><path d="M3 3h6" stroke="#000" strokeDasharray="1.500 1" /></svg>
        </button>
        <button aria-label="Rotate" className="ml-1 flex h-[25px] w-[25px] items-center justify-center rounded border border-[#9a9aa2] bg-white">
          <Svg s={18}>
            <path d="M5 5q-6 7 2 11h6q7-4 3-10" stroke="#000" strokeWidth="1.500" />
            <path d="M10 0v19" stroke="#000" strokeWidth="1.300" strokeDasharray="4 1.500" />
            <path d="M12 3h6v6z" fill="#000" />
            <path d="M7 17h6l-3 3z" fill="#000" stroke="none" />
          </Svg>
        </button>
        <span className={`${line} ml-1`} />
        <input aria-label="Reference" readOnly value="1条边" className="ml-2 h-4 w-[158px] border border-[#a6a6a6] bg-[#ffffe1] pl-[15px] text-xs outline-none" />
        <span className={`${line} ml-[10px]`} />
        <div className="ml-[10px]"><Combo label="Distance" value="10.00" /></div>
        <div className="ml-auto flex items-center pr-[7px]">
          <button aria-label="Pause" className="mr-3 flex gap-1"><span className="h-3.5 w-1 bg-[#2455a8]" /><span className="h-3.5 w-1 bg-[#2455a8]" /></button>
          <label className="flex items-center gap-1">
            <input type="checkbox" checked={preview} onChange={() => setPreview(!preview)} className="peer sr-only" />
            <svg width="13" height="13" viewBox="0 0 13 13" fill="none" aria-hidden="true">
              <path d="M.5 .5h12v12H.5z" fill="#fff" stroke="#446" />
              {preview && <path d="M3 6l2.500 3L10 3.500" stroke="#109a18" strokeWidth="2" />}
            </svg>
            <svg width="20" height="12" viewBox="0 0 20 12" fill="none" stroke="#222" role="img" aria-label="Preview">
              <circle cx="4.500" cy="7" r="3.500" />
              <circle cx="13" cy="7" r="3.500" />
              <path d="M8 6h1.500M1 6l4-4M16 5l3-4" />
            </svg>
          </label>
          <button aria-label="Accept" className="ml-2 flex h-[25px] w-[26px] items-center justify-center border-2 border-[#2f5fb4] bg-[#d4e2f6]">
            <svg width="18" height="15" viewBox="0 0 18 15" aria-hidden="true"><path d="M0 8l3-3 4 4 8-9 3 2L8 15H6z" fill="#0f9414" /></svg>
          </button>
          <button aria-label="Cancel" className="ml-2">
            <svg width="16" height="14" viewBox="0 0 16 14" aria-hidden="true"><path d="M0 2l3-2 5 4 5-4 3 1-5 6 5 6-3 1-5-4-5 4-3-1 5-6z" fill="#d02408" /></svg>
          </button>
        </div>
      </div>
      <Watermark />
    </footer>
  );
}

export default function App() {
  return (
    <div className="min-h-screen bg-[#1c3f9c] font-['Liberation_Serif','Noto_Sans_CJK_SC',sans-serif] text-xs leading-4 text-black">
      <div className="flex min-h-screen flex-col">
        <TitleBar />
        <div className="flex flex-1 flex-col border-l-[5px] border-r-[3px] border-l-[#386dc8] border-r-[#386dc8] bg-[#ebe9ed]">
          <nav className="flex h-[21px] shrink-0 items-center gap-3 border-b border-white pl-1">
            {menus.map(([name, k]) => (
              <button key={k} className="whitespace-nowrap">{name}<Key k={k} /></button>
            ))}
          </nav>
          <Toolbars />
          <div className="flex flex-1">
            <ModelTree />
            <Splitter />
            <Viewport />
            <FeatureBars />
          </div>
          <Dashboard />
        </div>
      </div>
    </div>
  );
}
